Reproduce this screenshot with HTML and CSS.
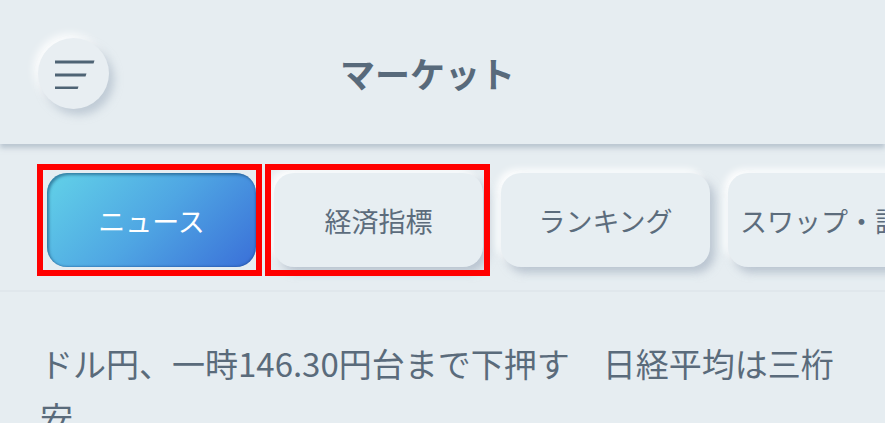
FILE: index.html
```html
<!DOCTYPE html>
<html lang="ja">

<head>
    <meta charset="UTF-8">
    <meta name="viewport" content="width=device-width, initial-scale=1.0">
    <title>マーケット</title>
    <link rel="stylesheet" href="styles.css">
</head>

<body>
    <header class="header">
        <button class="menu-btn" aria-label="メニュー">
            <svg width="40" height="30" viewBox="0 0 40 30">
                <path d="M0 1.5h39.5l-1 3H0z" fill="#4e6374" />
                <path d="M0 14.5h31.5l-1 3H0z" fill="#4e6374" />
                <path d="M0 27.5h23.5l-1 3H0z" fill="#4e6374" />
            </svg>
        </button>
        <h1 class="title">マーケット</h1>
    </header>

    <nav class="tabs">
        <button class="tab tab-active">ニュース</button>
        <button class="tab">経済指標</button>
        <button class="tab">ランキング</button>
        <button class="tab tab-wide">スワップ・証拠金</button>
        <span class="mark mark-1"></span>
        <span class="mark mark-2"></span>
    </nav>

    <main class="news">
        <p class="news-title">ドル円、一時146.30円台まで下押す　日経平均は三桁安</p>
    </main>
</body>

</html>
```

FILE: styles.css
```css
body {
    margin: 0;
    background: #e6edf1;
    color: #5a6b7b;
    font-family: "Noto Sans CJK JP", "Noto Sans", sans-serif;
    overflow: hidden;
}

.header {
    position: relative;
    z-index: 2;
    display: flex;
    align-items: center;
    height: 144px;
    padding: 0 38px;
    background: #e6edf1;
    box-shadow: 0 4px 5px rgba(150, 166, 182, 0.55);
}

.menu-btn {
    display: flex;
    align-items: center;
    justify-content: center;
    width: 71px;
    height: 71px;
    margin-top: 3px;
    padding: 0 0 0 2px;
    border: none;
    border-radius: 50%;
    background: #e8eef2;
    box-shadow: 5px 6px 9px rgba(160, 175, 192, 0.55), -4px -4px 8px rgba(255, 255, 255, 0.9);
}

.title {
    margin: 0 0 0 231px;
    font-size: 35px;
    font-weight: 700;
    color: #586a7b;
}

.tabs {
    position: relative;
    display: flex;
    gap: 18px;
    height: 148px;
    padding: 29px 0 0 47px;
    box-sizing: border-box;
    overflow: hidden;
    border-bottom: 2px solid #e0e7ec;
}

.tab {
    flex: none;
    width: 209px;
    height: 94px;
    border: none;
    border-radius: 20px;
    background: #e7eef2;
    color: #5c6c7c;
    font-family: inherit;
    font-size: 27px;
    box-shadow: 5px 6px 8px rgba(158, 172, 188, 0.6), -4px -4px 7px rgba(255, 255, 255, 0.9);
}

.tab-active {
    color: #fff;
    background: linear-gradient(135deg, #62d2e8 0%, #4fa6e3 50%, #3a6fd8 100%);
    box-shadow: inset 2px 2px 3px rgba(20, 70, 110, 0.55), inset -1px -1px 2px rgba(20, 60, 120, 0.35);
}

.tab-wide {
    width: auto;
    padding: 0 12px;
}

.mark {
    position: absolute;
    top: 20px;
    width: 213px;
    height: 100px;
    border: 6px solid #ff0000;
}

.mark-1 {
    left: 37px;
}

.mark-2 {
    left: 265px;
}

.news {
    padding: 44px 40px 0;
}

.news-title {
    margin: 0;
    font-size: 33px;
    line-height: 54px;
    color: #5a6b7b;
}
```
